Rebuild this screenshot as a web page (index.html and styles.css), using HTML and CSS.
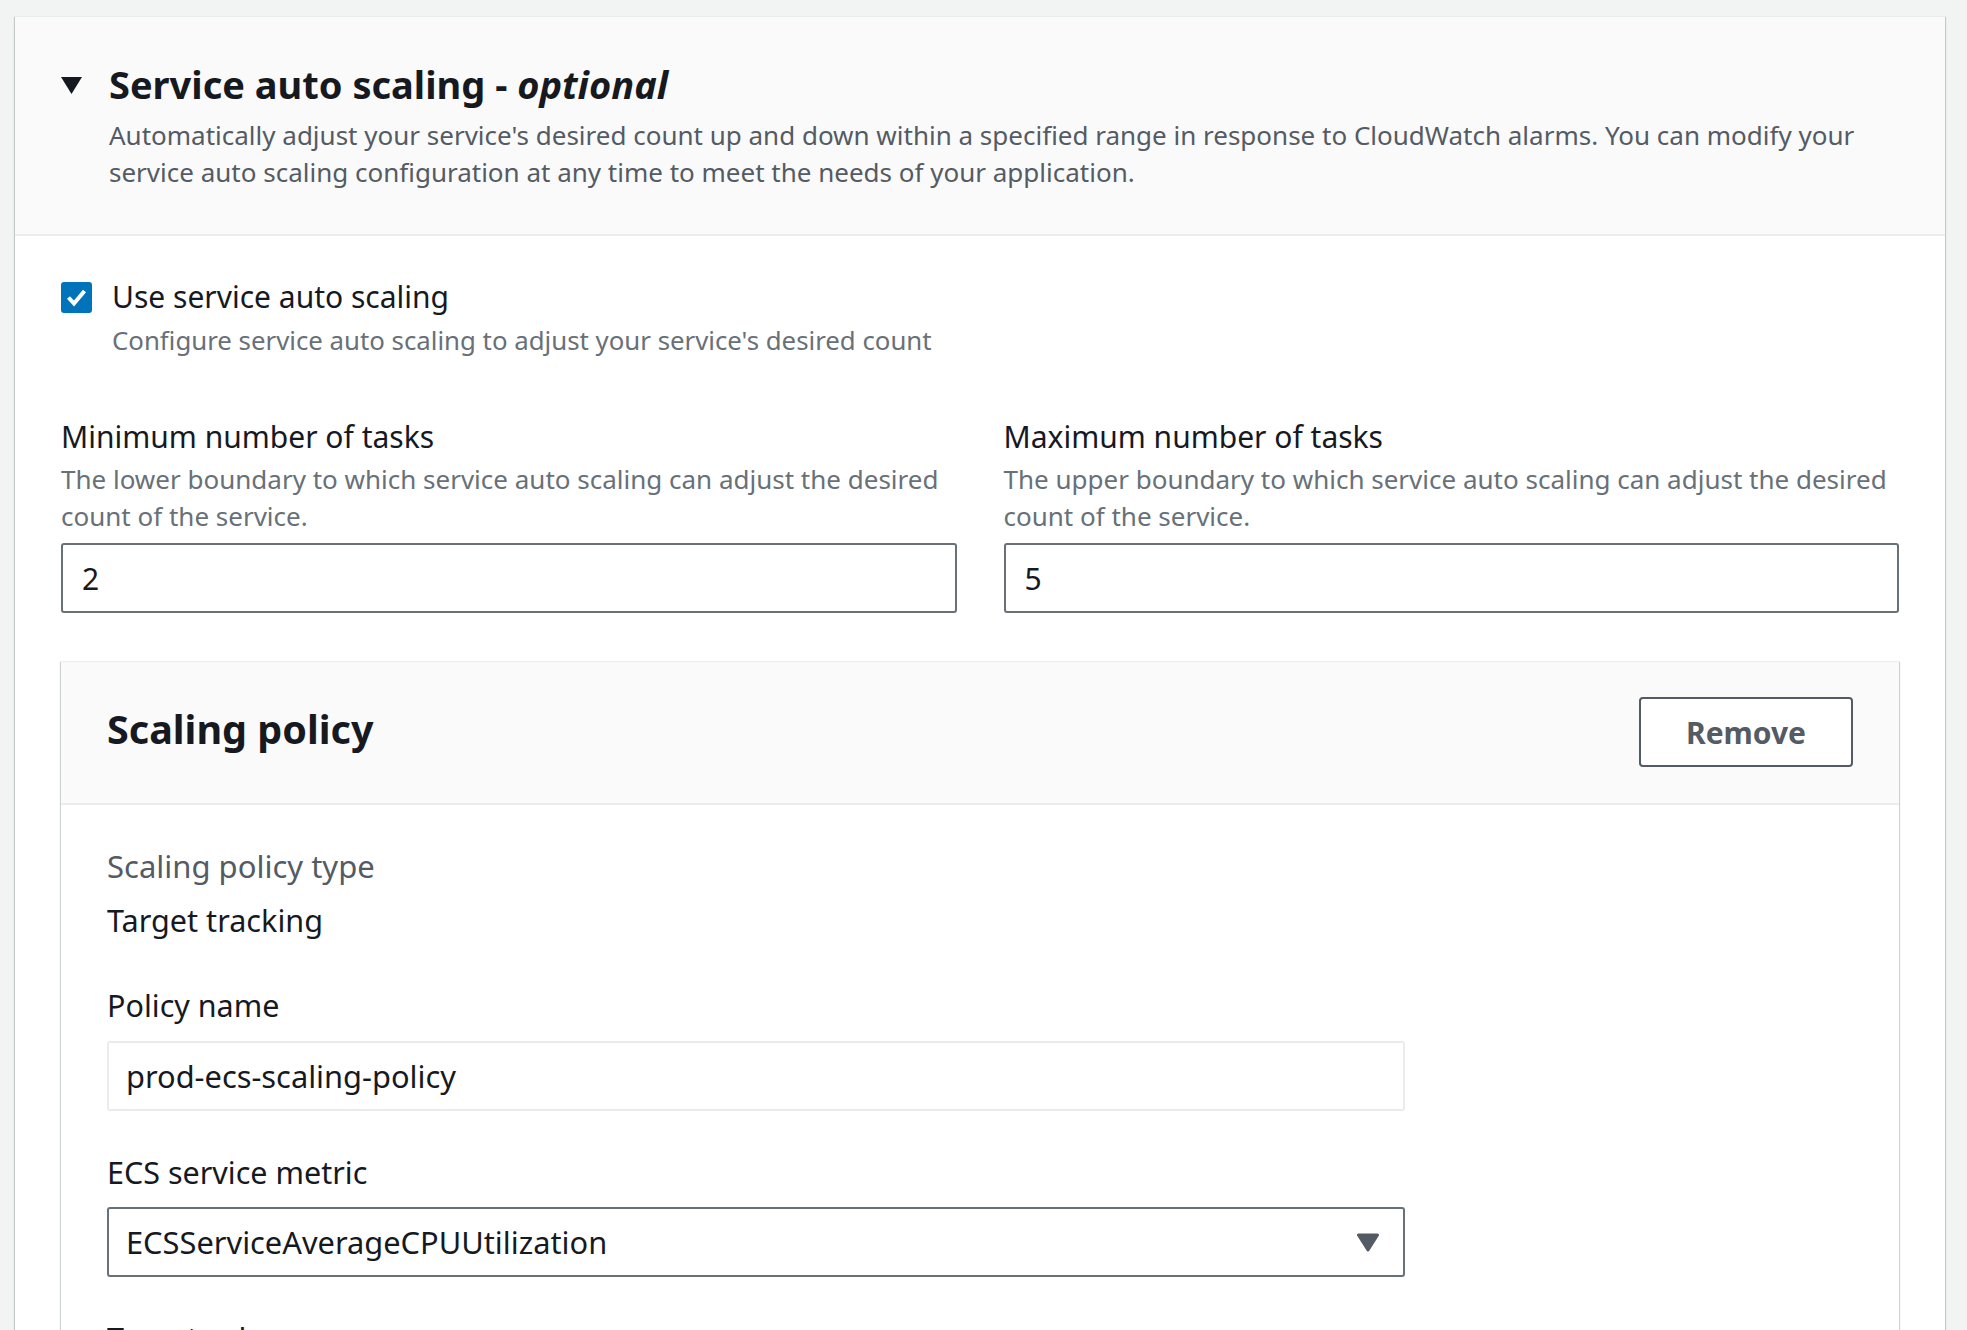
FILE: index.html
```html
<!DOCTYPE html>
<html lang="en">
<head>
<meta charset="utf-8">
<title>Service auto scaling</title>
<link rel="stylesheet" href="styles.css">
</head>
<body>
<div class="card">
  <div class="card-header">
    <span class="expand-icon">
      <svg width="21" height="17" viewBox="0 0 21 17"><polygon points="0,0 21,0 10.5,17" fill="#16191f"/></svg>
    </span>
    <div class="header-text">
      <h2 class="title">Service auto scaling - <em>optional</em></h2>
      <p class="header-desc">Automatically adjust your service's desired count up and down within a specified range in response to CloudWatch alarms. You can modify your service auto scaling configuration at any time to meet the needs of your application.</p>
    </div>
  </div>
  <div class="card-body">
    <div class="checkbox-field">
      <span class="checkbox">
        <svg width="31" height="31" viewBox="0 0 31 31"><rect x="0" y="0" width="31" height="31" rx="3" fill="#0073bb"/><polyline points="7.5,15.5 13,21.5 23.5,9" fill="none" stroke="#ffffff" stroke-width="4"/></svg>
      </span>
      <div class="checkbox-text">
        <div class="checkbox-label">Use service auto scaling</div>
        <div class="checkbox-desc">Configure service auto scaling to adjust your service's desired count</div>
      </div>
    </div>
    <div class="two-col">
      <div class="field">
        <div class="field-label">Minimum number of tasks</div>
        <div class="field-desc">The lower boundary to which service auto scaling can adjust the desired count of the service.</div>
        <input class="input input-top" type="text" value="2" readonly>
      </div>
      <div class="field">
        <div class="field-label">Maximum number of tasks</div>
        <div class="field-desc">The upper boundary to which service auto scaling can adjust the desired count of the service.</div>
        <input class="input input-top" type="text" value="5" readonly>
      </div>
    </div>
    <div class="inner">
      <div class="inner-header">
        <h3 class="inner-title">Scaling policy</h3>
        <button class="btn" type="button">Remove</button>
      </div>
      <div class="inner-body">
        <div class="kv-key">Scaling policy type</div>
        <div class="kv-value">Target tracking</div>
        <div class="field field-spaced">
          <div class="field-label">Policy name</div>
          <input class="input input-light input-gap" type="text" value="prod-ecs-scaling-policy" readonly>
        </div>
        <div class="field field-spaced2">
          <div class="field-label">ECS service metric</div>
          <div class="select input-gap2">
            <span class="select-text">ECSServiceAverageCPUUtilization</span>
            <svg class="select-caret" width="24" height="19" viewBox="0 0 24 19"><polygon points="2.5,2 21.5,2 12,17" fill="#545b64" stroke="#545b64" stroke-width="3" stroke-linejoin="round"/></svg>
          </div>
        </div>
        <div class="field field-spaced2">
          <div class="field-label">Target value</div>
          <input class="input input-gap2" type="text" value="70" readonly>
        </div>
      </div>
    </div>
  </div>
</div>
</body>
</html>
```

FILE: styles.css
```css
* {
  box-sizing: border-box;
}

html, body {
  margin: 0;
  padding: 0;
}

body {
  background: #f2f3f3;
  font-family: "Noto Sans", "Open Sans", "Liberation Sans", sans-serif;
  color: #16191f;
}

.card {
  margin: 16px 22px 0 15px;
  background: #ffffff;
  border-top: 1px solid #eaeded;
  box-shadow: 0 1px 1px 0 rgba(0, 28, 36, 0.3), 1px 1px 1px 0 rgba(0, 28, 36, 0.15), -1px 1px 1px 0 rgba(0, 28, 36, 0.15);
}

.card-header {
  display: flex;
  align-items: flex-start;
  background: #fafafa;
  padding: 43px 46px 43px 46px;
  border-bottom: 2px solid #eaeded;
}

.expand-icon {
  flex: none;
  width: 28px;
  margin-right: 20px;
  height: 48px;
  display: flex;
  align-items: center;
}

.expand-icon svg {
  display: block;
  margin-top: 2px;
}

.header-text {
  flex: 1;
  min-width: 0;
}

.title {
  margin: 0;
  font-size: 38px;
  line-height: 48px;
  font-weight: 700;
  color: #16191f;
}

.title em {
  font-style: italic;
  font-weight: 700;
}

.header-desc {
  margin: 9px 0 0 0;
  font-size: 26px;
  line-height: 37px;
  color: #545b64;
}

.card-body {
  padding: 39px 46px 40px 46px;
}

.checkbox-field {
  display: flex;
  align-items: flex-start;
}

.checkbox {
  flex: none;
  width: 31px;
  height: 31px;
  margin-top: 7px;
  margin-right: 20px;
}

.checkbox svg {
  display: block;
}

.checkbox-label {
  font-size: 30px;
  line-height: 44px;
  color: #16191f;
}

.checkbox-desc {
  margin-top: 3px;
  font-size: 25.8px;
  line-height: 37px;
  color: #687078;
}

.two-col {
  display: grid;
  grid-template-columns: 1fr 1fr;
  column-gap: 47px;
  margin-top: 56px;
}

.field {
  display: flex;
  flex-direction: column;
  align-items: flex-start;
}

.field-label {
  font-size: 30px;
  line-height: 44px;
  color: #16191f;
}

.field-desc {
  margin-top: 2px;
  font-size: 26px;
  line-height: 37px;
  color: #687078;
}

.input {
  display: block;
  width: 100%;
  height: 70px;
  padding: 0 19px;
  border: 2px solid #687078;
  border-radius: 3px;
  background: #ffffff;
  font-family: "Noto Sans", "Open Sans", "Liberation Sans", sans-serif;
  font-size: 30px;
  color: #16191f;
  outline: none;
}

.input-top {
  margin-top: 8px;
}

.input-light {
  border-color: #e9ebed;
}

.inner .input,
.select {
  width: 1298px;
  padding-left: 17px;
  font-size: 30.8px;
}

.inner .field-label {
  font-size: 30.5px;
}

.input-gap {
  margin-top: 14px;
}

.input-gap2 {
  margin-top: 13px;
}

.inner {
  margin-top: 48px;
  background: #ffffff;
  border-top: 1px solid #eaeded;
  box-shadow: 0 1px 1px 0 rgba(0, 28, 36, 0.3), 1px 1px 1px 0 rgba(0, 28, 36, 0.15), -1px 1px 1px 0 rgba(0, 28, 36, 0.15);
}

.inner-header {
  display: flex;
  align-items: center;
  justify-content: space-between;
  background: #fafafa;
  padding: 35px 46px 36px 46px;
  border-bottom: 2px solid #eaeded;
}

.inner-title {
  margin: 0 0 6px 0;
  font-size: 39.5px;
  line-height: 48px;
  font-weight: 700;
  color: #16191f;
}

.btn {
  width: 214px;
  height: 70px;
  border: 2px solid #545b64;
  border-radius: 4px;
  background: #ffffff;
  font-family: "Noto Sans", "Open Sans", "Liberation Sans", sans-serif;
  font-size: 30px;
  font-weight: 700;
  color: #545b64;
  padding: 0;
}

.inner-body {
  padding: 39px 46px 60px 46px;
}

.kv-key {
  font-size: 31px;
  line-height: 44px;
  color: #545b64;
}

.kv-value {
  margin-top: 10px;
  font-size: 30.6px;
  line-height: 44px;
  color: #16191f;
}

.field-spaced {
  margin-top: 41px;
}

.field-spaced2 {
  margin-top: 39px;
}

.select {
  display: flex;
  align-items: center;
  justify-content: space-between;
  height: 70px;
  padding: 0 23px 0 17px;
  border: 2px solid #687078;
  border-radius: 3px;
  background: #ffffff;
  color: #16191f;
}

.select-caret {
  display: block;
  flex: none;
}
```
